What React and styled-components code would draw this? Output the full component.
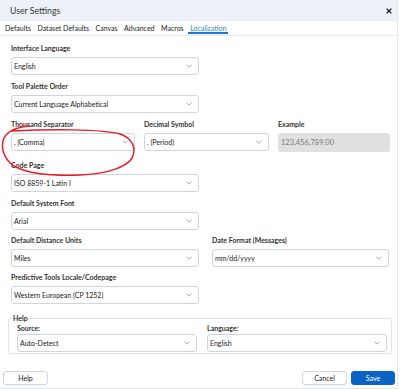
import React from 'react';
import styled, { createGlobalStyle } from 'styled-components';

const Global = createGlobalStyle`
  html, body { margin: 0; padding: 0; background: #fff; }
  body { font-family: Lato, "Open Sans", "Liberation Sans", sans-serif; }
  #root { width: 400px; height: 389px; }
`;

const Dialog = styled.div`
  position: relative;
  width: 398px;
  height: 389px;
  box-sizing: border-box;
  border-right: 1px solid #e3e6ea;
  border-bottom: 1px solid #e3e6ea;
  background: #fff;
  display: flex;
  flex-direction: column;
  font-family: Lato, "Open Sans", sans-serif;
  color: #222;
  overflow: hidden;
`;

const TitleBar = styled.div`
  height: 21px;
  flex: none;
  background: #eef2f8;
  display: flex;
  align-items: center;
  justify-content: space-between;
  padding: 0 5px 0 10px;
`;

const Title = styled.span`
  font-size: 8.7px;
  color: #333;
`;

const CloseBtn = styled.span`
  display: flex;
  width: 7px;
  height: 7px;
  align-items: center;
  justify-content: center;
`;

const TabBar = styled.div`
  height: 15px;
  flex: none;
  box-sizing: border-box;
  display: flex;
  align-items: flex-end;
  gap: 2.5px;
  padding: 0 0 1px 3px;
  border-bottom: 1px solid #e4e7eb;
`;

const Tab = styled.div`
  font-size: 7px;
  line-height: 7px;
  padding: 4px 2px 0;
  border-bottom: 2px solid ${p => (p.$active ? '#1f7bd3' : 'transparent')};
  color: ${p => (p.$active ? '#2a7fd2' : '#222')};
`;

const Content = styled.div`
  padding: 7px 0 0 11px;
  display: flex;
  flex-direction: column;
  gap: 6px;
`;

const Field = styled.div`
  display: flex;
  flex-direction: column;
  margin-top: ${p => p.$mt || 0}px;
`;

const Row = styled.div`
  display: grid;
  grid-template-columns: ${p => p.$cols};
  column-gap: ${p => p.$gap}px;
  margin-top: ${p => p.$mt || 0}px;
`;

const Label = styled.div`
  font-size: 7px;
  line-height: 10px;
  height: 10px;
  font-weight: 700;
  color: #333;
  margin-bottom: 4px;
  white-space: nowrap;
`;

const SelectBox = styled.div`
  height: 18px;
  box-sizing: border-box;
  width: ${p => (p.$w ? `${p.$w}px` : '100%')};
  border: 1px solid #ccd4e6;
  border-radius: 3px;
  background: #fff;
  display: flex;
  align-items: center;
  justify-content: space-between;
  padding: 0 6px 0 2px;
  font-size: 7px;
  color: #222;
`;

const ExampleBox = styled.div`
  height: 19px;
  box-sizing: border-box;
  border-radius: 3px;
  background: #e0e0e0;
  display: flex;
  align-items: center;
  padding: 0 3px;
  font-size: 7.5px;
  color: #7a7a7a;
`;

const Chevron = () => (
  <svg width="6" height="4" viewBox="0 0 6 4">
    <path d="M0.5 0.6 L3 3.2 L5.5 0.6" fill="none" stroke="#9097a3" strokeWidth="0.8" />
  </svg>
);

const Select = ({ value, w }) => (
  <SelectBox $w={w}>
    <span>{value}</span>
    <Chevron />
  </SelectBox>
);

const Group = styled.fieldset`
  margin: 3px 0 0 -3px;
  width: 384px;
  box-sizing: border-box;
  border: 1px solid #dfe3ea;
  border-radius: 3px;
  padding: 0 4px 1px 8px;
  min-inline-size: 0;
`;

const Legend = styled.legend`
  font-size: 7px;
  line-height: 10px;
  font-weight: 700;
  color: #333;
  padding: 0 1px;
  margin-left: -5px;
`;

const GroupInner = styled.div`
  display: grid;
  grid-template-columns: 180px 180px;
  column-gap: 10px;
`;

const GroupLabel = styled.div`
  font-size: 7px;
  line-height: 10px;
  font-weight: 700;
  color: #333;
  margin-bottom: 1px;
`;

const Footer = styled.div`
  margin-top: auto;
  display: flex;
  align-items: center;
  padding: 0 2px 3px 3px;
`;

const Spacer = styled.div`
  flex: 1;
`;

const Button = styled.button`
  width: ${p => p.$w || 45}px;
  height: 14px;
  box-sizing: border-box;
  border-radius: 3px;
  border: 1px solid ${p => (p.$primary ? '#0b63c4' : '#ccd4e6')};
  background: ${p => (p.$primary ? '#0b63c4' : '#fff')};
  color: ${p => (p.$primary ? '#fff' : '#222')};
  font-family: Lato, "Open Sans", sans-serif;
  font-size: 7px;
  padding: 0;
  margin-left: ${p => p.$ml || 0}px;
  display: flex;
  align-items: center;
  justify-content: center;
`;

const Annotation = styled.svg`
  position: absolute;
  left: 0;
  top: 0;
  pointer-events: none;
`;

export default function App() {
  return (
    <>
      <Global />
      <Dialog>
        <TitleBar>
          <Title>User Settings</Title>
          <CloseBtn>
            <svg width="6" height="6" viewBox="0 0 6 6">
              <path d="M0.6 0.6 L5.4 5.4 M5.4 0.6 L0.6 5.4" stroke="#111" strokeWidth="1.3" />
            </svg>
          </CloseBtn>
        </TitleBar>
        <TabBar>
          <Tab>Defaults</Tab>
          <Tab>Dataset Defaults</Tab>
          <Tab>Canvas</Tab>
          <Tab>Advanced</Tab>
          <Tab>Macros</Tab>
          <Tab $active>Localization</Tab>
        </TabBar>
        <Content>
          <Field>
            <Label>Interface Language</Label>
            <Select value="English" w={188} />
          </Field>
          <Field>
            <Label>Tool Palette Order</Label>
            <Select value="Current Language Alphabetical" w={188} />
          </Field>
          <Row $cols="124px 125px 112px" $gap={9}>
            <Field>
              <Label>Thousand Separator</Label>
              <Select value=", (Comma)" />
            </Field>
            <Field>
              <Label>Decimal Symbol</Label>
              <Select value=". (Period)" />
            </Field>
            <Field>
              <Label>Example</Label>
              <ExampleBox>123,456,789.00</ExampleBox>
            </Field>
          </Row>
          <Field $mt={2}>
            <Label>Code Page</Label>
            <Select value="ISO 8859-1 Latin I" w={188} />
          </Field>
          <Field>
            <Label>Default System Font</Label>
            <Select value="Arial" w={188} />
          </Field>
          <Row $cols="188px 177px" $gap={13} $mt={-1}>
            <Field>
              <Label>Default Distance Units</Label>
              <Select value="Miles" />
            </Field>
            <Field>
              <Label>Date Format (Messages)</Label>
              <Select value="mm/dd/yyyy" />
            </Field>
          </Row>
          <Field $mt={-1}>
            <Label>Predictive Tools Locale/Codepage</Label>
            <Select value="Western European (CP 1252)" w={188} />
          </Field>
          <Group>
            <Legend>Help</Legend>
            <GroupInner>
              <Field>
                <GroupLabel>Source:</GroupLabel>
                <Select value="Auto-Detect" />
              </Field>
              <Field>
                <GroupLabel>Language:</GroupLabel>
                <Select value="English" />
              </Field>
            </GroupInner>
          </Group>
        </Content>
        <Footer>
          <Button>Help</Button>
          <Spacer />
          <Button>Cancel</Button>
          <Button $primary $ml={4} $w={44}>Save</Button>
        </Footer>
        <Annotation width="400" height="389" viewBox="0 0 400 389">
          <path
            d="M30 126 C18 127, 8 130, 4 138 C0 148, 4 162, 18 168 C32 174, 55 176, 80 175 C105 174, 126 168, 132 158 C137 148, 132 138, 120 134 C100 129, 50 129, 12 131"
            fill="none"
            stroke="#ec1c24"
            strokeWidth="1.5"
            strokeLinecap="round"
          />
        </Annotation>
      </Dialog>
    </>
  );
}
